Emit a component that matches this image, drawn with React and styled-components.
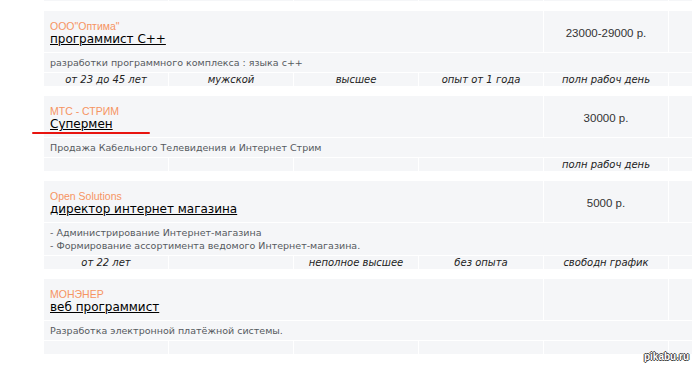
import React from "react";
import styled, { createGlobalStyle } from "styled-components";

const GlobalStyle = createGlobalStyle`
  html, body {
    margin: 0;
    padding: 0;
    background: #ffffff;
    overflow: hidden;
  }
  body {
    font-family: "DejaVu Sans", Verdana, sans-serif;
  }
`;

const Page = styled.div`
  position: relative;
  width: 692px;
  height: 365px;
  overflow: hidden;
`;

const List = styled.div`
  display: flex;
  flex-direction: column;
  gap: 10px;
  padding-left: 44px;
  width: 760px;
`;

const Block = styled.div`
  display: grid;
  grid-template-columns: repeat(6, 124px);
  column-gap: 1px;
  row-gap: 1px;
`;

const Cell = styled.div`
  background: #f5f6f8;
`;

const TopStrip = styled(Block)`
  height: 1px;
`;

const TitleCell = styled(Cell)`
  grid-column: span 4;
  height: 41px;
  padding: 9px 7px 0 6px;
  box-sizing: border-box;
  display: flex;
  flex-direction: column;
  align-items: flex-start;
`;

const SalaryCell = styled(Cell)`
  height: 41px;
  display: flex;
  align-items: center;
  justify-content: center;
  font-family: "Liberation Sans", Arial, sans-serif;
  font-size: 11.5px;
  color: #333;
  padding-top: 2px;
  box-sizing: border-box;
`;

const Company = styled.div`
  font-family: "Liberation Sans", Arial, sans-serif;
  color: #f59462;
  font-size: 10.5px;
  line-height: 12px;
`;

const Title = styled.a`
  display: block;
  color: #000;
  font-size: 12px;
  line-height: 14px;
  text-decoration: underline;
`;

const Desc = styled(Cell)`
  grid-column: span 6;
  padding: 3px 6px;
  font-size: 9.5px;
  line-height: 13px;
  color: #555a60;
`;

const Info = styled(Cell)`
  height: 13px;
  font-size: 10px;
  line-height: 13px;
  font-style: italic;
  color: #222;
  text-align: center;
  white-space: nowrap;
`;

const RedMark = styled.div`
  position: absolute;
  left: 32px;
  top: 132px;
  width: 118px;
  height: 2px;
  background: #e8140f;
  border-radius: 1px;
`;

const Watermark = styled.div`
  position: absolute;
  right: 3px;
  bottom: 3px;
  font-family: "Liberation Sans", Arial, sans-serif;
  font-size: 10px;
  font-weight: bold;
  color: #fff;
  text-shadow: -1px 0 #444, 1px 0 #444, 0 -1px #444, 0 1px #444;
`;

const vacancies = [
  {
    company: "ООО\"Оптима\"",
    title: "программист С++",
    salary: "23000-29000 р.",
    desc: ["разработки программного комплекса : языка с++"],
    info: ["от 23 до 45 лет", "мужской", "высшее", "опыт от 1 года", "полн рабоч день", ""],
  },
  {
    company: "МТС - СТРИМ",
    title: "Супермен",
    salary: "30000 р.",
    desc: ["Продажа Кабельного Телевидения и Интернет Стрим"],
    info: ["", "", "", "", "полн рабоч день", ""],
  },
  {
    company: "Open Solutions",
    title: "директор интернет магазина",
    salary: "5000 р.",
    desc: [
      "- Администрирование Интернет-магазина",
      "- Формирование ассортимента ведомого Интернет-магазина.",
    ],
    info: ["от 22 лет", "", "неполное высшее", "без опыта", "свободн график", ""],
  },
  {
    company: "МОНЭНЕР",
    title: "веб программист",
    salary: "",
    desc: ["Разработка электронной платёжной системы."],
    info: ["", "", "", "", "", ""],
  },
];

export default function App() {
  return (
    <Page>
      <GlobalStyle />
      <List>
        <TopStrip>
          {Array.from({ length: 6 }).map((_, i) => (
            <Cell key={i} />
          ))}
        </TopStrip>
        {vacancies.map((v, i) => (
          <Block key={i}>
            <TitleCell>
              <Company>{v.company}</Company>
              <Title href="#">{v.title}</Title>
            </TitleCell>
            <SalaryCell>{v.salary}</SalaryCell>
            <Cell />
            <Desc>
              {v.desc.map((d, j) => (
                <div key={j}>{d}</div>
              ))}
            </Desc>
            {v.info.map((t, j) => (
              <Info key={j}>{t}</Info>
            ))}
          </Block>
        ))}
      </List>
      <RedMark />
      <Watermark>pikabu.ru</Watermark>
    </Page>
  );
}
